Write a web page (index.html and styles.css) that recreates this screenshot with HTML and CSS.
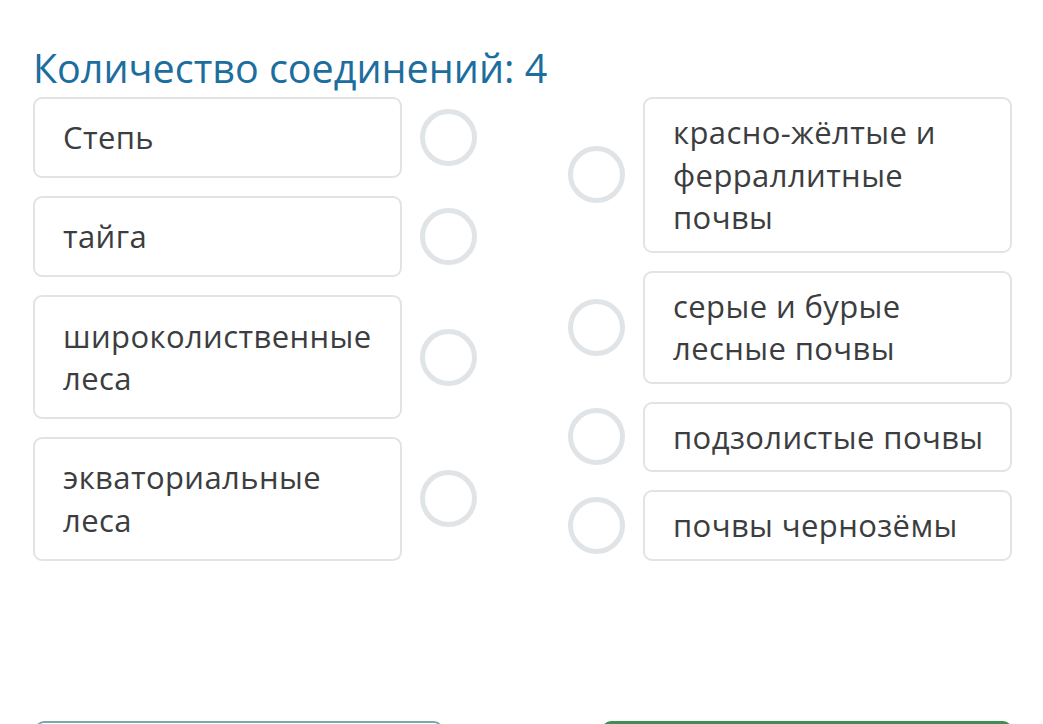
FILE: index.html
```html
<!DOCTYPE html>
<html lang="ru">
<head>
  <meta charset="UTF-8" />
  <meta name="viewport" content="width=device-width, initial-scale=1.0" />
  <title>Соединения</title>
  <link rel="stylesheet" href="styles.css">
</head>
<body>
  <h1 class="title">Количество соединений: 4</h1>

  <div class="match">
    <!-- left column -->
    <div class="col">
      <div class="row">
        <div class="card">Степь</div>
        <span class="dot"></span>
      </div>
      <div class="row">
        <div class="card">тайга</div>
        <span class="dot"></span>
      </div>
      <div class="row">
        <div class="card">широколиственные леса</div>
        <span class="dot"></span>
      </div>
      <div class="row">
        <div class="card">экваториальные леса</div>
        <span class="dot"></span>
      </div>
    </div>

    <!-- right column -->
    <div class="col">
      <div class="row">
        <span class="dot"></span>
        <div class="card">красно-жёлтые и ферраллитные почвы</div>
      </div>
      <div class="row">
        <span class="dot"></span>
        <div class="card">серые и бурые лесные почвы</div>
      </div>
      <div class="row">
        <span class="dot"></span>
        <div class="card">подзолистые почвы</div>
      </div>
      <div class="row">
        <span class="dot"></span>
        <div class="card">почвы чернозёмы</div>
      </div>
    </div>
  </div>

  <div class="actions">
    <button class="btn-outline"></button>
    <button class="btn-green"></button>
  </div>
</body>
</html>
```

FILE: styles.css
```css
body {
  font-family: 'Open Sans', 'Noto Sans', sans-serif;
  background-color: #fff;
  margin: 0;
  padding: 0 31px 0 33px;
  color: #3b3d40;
  height: 724px;
  overflow: hidden;
}
.title {
  font-size: 39.5px;
  font-weight: 400;
  color: #1c6e9e;
  margin: 0;
  padding-top: 42px;
  line-height: 52px;
  height: 55px;
}
.match {
  display: flex;
  gap: 91px;
}
.col {
  display: flex;
  flex-direction: column;
  gap: 18px;
}
.row {
  flex: 1 1 auto;
  display: flex;
  align-items: center;
  gap: 18px;
}
.card {
  box-sizing: border-box;
  width: 369px;
  align-self: stretch;
  display: flex;
  align-items: center;
  padding: 12px 22px 12px 28px;
  border: 2px solid #e1e3e5;
  border-radius: 9px;
  font-size: 31px;
  line-height: 42.5px;
  letter-spacing: 0.4px;
}
.dot {
  box-sizing: border-box;
  width: 57px;
  height: 57px;
  flex: none;
  border: 5px solid #e1e4e7;
  border-radius: 50%;
}
.actions {
  display: flex;
  justify-content: space-between;
  margin-top: 160px;
  padding-left: 2px;
}
button {
  height: 56px;
  border-radius: 9px;
  cursor: pointer;
}
.btn-outline {
  width: 408px;
  background: #fff;
  border: 2px solid #7aa9ad;
}
.btn-green {
  width: 410px;
  background: #3f8f52;
  border: none;
}
```
